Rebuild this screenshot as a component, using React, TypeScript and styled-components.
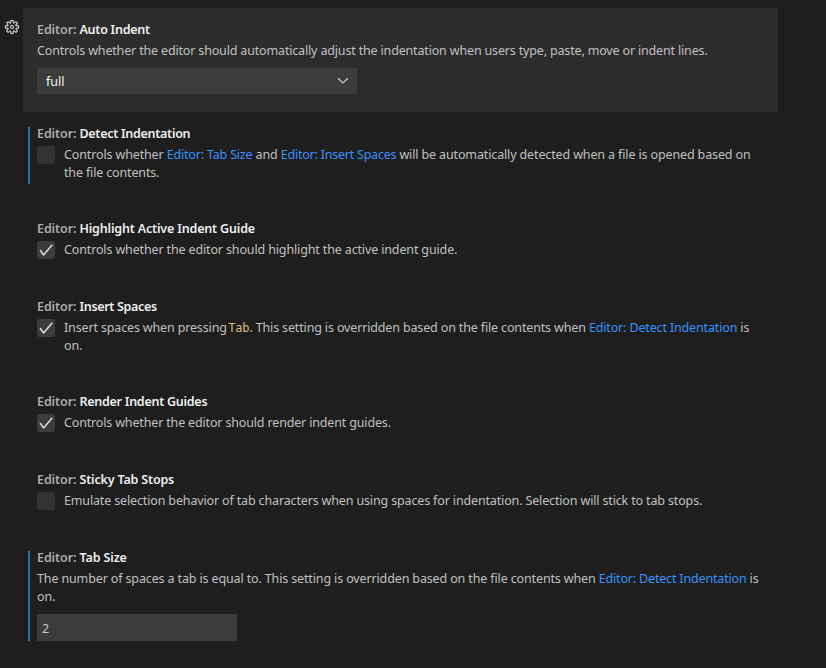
import React from "react";
import styled, { createGlobalStyle } from "styled-components";

const GlobalStyle = createGlobalStyle`
  * { box-sizing: border-box; }
  body {
    margin: 0;
    background: #1e1e1e;
    color: #c0c0c0;
    font-family: "Segoe UI", "Noto Sans", "Open Sans", sans-serif;
    font-size: 12.5px;
    line-height: 18px;
    overflow: hidden;
  }
`;

const Page = styled.main`
  width: 826px;
  height: 668px;
  padding-top: 8px;
  overflow: hidden;
`;

const Row = styled.div<{ $height: number }>`
  display: flex;
  height: ${(p) => p.$height}px;
`;

const Gutter = styled.div`
  flex: none;
  width: 23px;
  padding: 11px 0 0 4px;
`;

const Item = styled.section<{ $focused?: boolean }>`
  flex: none;
  display: flex;
  width: 755px;
  padding: 13px 14px 0 5px;
  background: ${(p) => (p.$focused ? "#2c2c2c" : "transparent")};
`;

const Marker = styled.div<{ $height?: number }>`
  flex: none;
  width: 2px;
  margin: 2px 7px 0 0;
  height: ${(p) => p.$height ?? 0}px;
  background: #0c7d9d;
`;

const Body = styled.div`
  flex: none;
  width: 736px;
`;

const Title = styled.h3<{ $spacing: number }>`
  margin: 0 0 3px;
  font-size: 12.5px;
  line-height: 18px;
  font-weight: 600;
  white-space: pre;
  color: #efefef;
  letter-spacing: ${(p) => p.$spacing}px;
`;

const Category = styled.span`
  color: #adadad;
  letter-spacing: -0.1px;
`;

const Line = styled.div<{ $spacing?: number }>`
  white-space: pre;
  letter-spacing: ${(p) => p.$spacing ?? 0}px;
`;

const Link = styled.a<{ $spacing?: number }>`
  color: #3794ff;
  letter-spacing: ${(p) => (p.$spacing === undefined ? "inherit" : `${p.$spacing}px`)};
`;

const Code = styled.code`
  margin-left: -1.7px;
  color: #d7ba7d;
  font: 12px/15px "DejaVu Sans Mono", monospace;
`;

const CheckRow = styled.div`
  display: flex;
  gap: 9px;
`;

const Box = styled.span<{ $on?: boolean }>`
  flex: none;
  display: grid;
  place-items: center;
  width: 18px;
  height: 18px;
  border-radius: 3px;
  background: ${(p) => (p.$on ? "#3c3c3c" : "#333333")};
`;

const Select = styled.div`
  display: flex;
  align-items: center;
  justify-content: space-between;
  width: 320px;
  height: 26px;
  margin-top: 8px;
  padding: 1px 8px 0 9px;
  background: #3c3c3c;
  color: #f0f0f0;

  svg {
    margin-bottom: 1px;
  }
`;

const NumberField = styled.div`
  width: 200px;
  height: 27px;
  margin-top: 8px;
  padding: 6px 5px 0;
  background: #3c3c3c;
  color: #cccccc;
`;

const Gear = () => (
  <svg width="16" height="16" viewBox="0 0 16 16" fill="#c5c5c5" fillRule="evenodd" stroke="#c5c5c5" strokeWidth=".25">
    <path d="M9.1 4.4L8.6 2H7.4l-.5 2.4-.7.3-2-1.3-.9.8 1.3 2-.2.7-2.4.5v1.2l2.4.5.3.8-1.3 2 .8.8 2-1.3.8.3.4 2.3h1.2l.5-2.4.8-.3 2 1.3.8-.8-1.3-2 .3-.8 2.3-.4V7.4l-2.4-.5-.3-.8 1.3-2-.8-.8-2 1.3-.7-.2zM9.4 1l.5 2.4L12 2.1l2 2-1.4 2.1 2.4.4v2.8l-2.4.5L14 12l-2 2-2.1-1.4-.5 2.4H6.6l-.5-2.4L4 13.9l-2-2 1.4-2.1L1 9.4V6.6l2.4-.5L2.1 4l2-2 2.1 1.4.4-2.4h2.8zm.6 7c0 1.1-.9 2-2 2s-2-.9-2-2 .9-2 2-2 2 .9 2 2zM8 9c.6 0 1-.4 1-1s-.4-1-1-1-1 .4-1 1 .4 1 1 1z" />
  </svg>
);

const Check = () => (
  <svg width="16" height="16" viewBox="0 0 16 16" fill="#f0f0f0">
    <path fillRule="evenodd" clipRule="evenodd" d="M14.431 3.323l-8.47 10-.79-.036-3.35-4.77.818-.574 2.978 4.24 8.051-9.506.764.646z" stroke="#f0f0f0" strokeWidth=".5" />
  </svg>
);

const Chevron = () => (
  <svg width="12" height="12" viewBox="0 0 12 12" fill="none" stroke="#cccccc" strokeWidth="1.2">
    <path d="M1 3.3l5 4.7 5-4.7" />
  </svg>
);

interface SettingProps {
  name: string;
  height: number;
  spacing: number;
  marker?: number;
  focused?: boolean;
  children: React.ReactNode;
}

const Setting = ({ name, height, spacing, marker, focused, children }: SettingProps) => (
  <Row $height={height}>
    <Gutter>{focused && <Gear />}</Gutter>
    <Item $focused={focused}>
      <Marker $height={marker} />
      <Body>
        <Title $spacing={spacing}><Category>Editor: </Category>{name}</Title>
        {children}
      </Body>
    </Item>
  </Row>
);

const Toggle = ({ on, children }: { on?: boolean; children: React.ReactNode }) => (
  <CheckRow>
    <Box $on={on}>{on && <Check />}</Box>
    <div>{children}</div>
  </CheckRow>
);

export default function App() {
  return (
    <Page>
      <GlobalStyle />
      <Setting name="Auto Indent" height={104} spacing={-0.25} focused>
        <Line $spacing={-0.164}>Controls whether the editor should automatically adjust the indentation when users type, paste, move or indent lines.</Line>
        <Select>full<Chevron /></Select>
      </Setting>
      <Setting name="Detect Indentation" height={95} spacing={-0.28} marker={57}>
        <Toggle>
          <Line $spacing={-0.133}>Controls whether <Link $spacing={-0.18}>Editor: Tab Size</Link> and <Link $spacing={-0.22}>Editor: Insert Spaces</Link> will be automatically detected when a file is opened based on</Line>
          <Line $spacing={-0.15}>the file contents.</Line>
        </Toggle>
      </Setting>
      <Setting name="Highlight Active Indent Guide" height={78} spacing={-0.17}>
        <Toggle on><Line $spacing={-0.14}>Controls whether the editor should highlight the active indent guide.</Line></Toggle>
      </Setting>
      <Setting name="Insert Spaces" height={95} spacing={-0.32}>
        <Toggle on>
          <Line $spacing={-0.148}>Insert spaces when pressing <Code>Tab</Code>. This setting is overridden based on the file contents when <Link>Editor: Detect Indentation</Link> is</Line>
          <Line $spacing={-0.15}>on.</Line>
        </Toggle>
      </Setting>
      <Setting name="Render Indent Guides" height={78} spacing={-0.26}>
        <Toggle on><Line $spacing={-0.16}>Controls whether the editor should render indent guides.</Line></Toggle>
      </Setting>
      <Setting name="Sticky Tab Stops" height={78} spacing={-0.17}>
        <Toggle><Line $spacing={-0.147}>Emulate selection behavior of tab characters when using spaces for indentation. Selection will stick to tab stops.</Line></Toggle>
      </Setting>
      <Setting name="Tab Size" height={120} spacing={-0.12} marker={90}>
        <Line $spacing={-0.135}>The number of spaces a tab is equal to. This setting is overridden based on the file contents when <Link $spacing={-0.17}>Editor: Detect Indentation</Link> is</Line>
        <Line>on.</Line>
        <NumberField>2</NumberField>
      </Setting>
    </Page>
  );
}
